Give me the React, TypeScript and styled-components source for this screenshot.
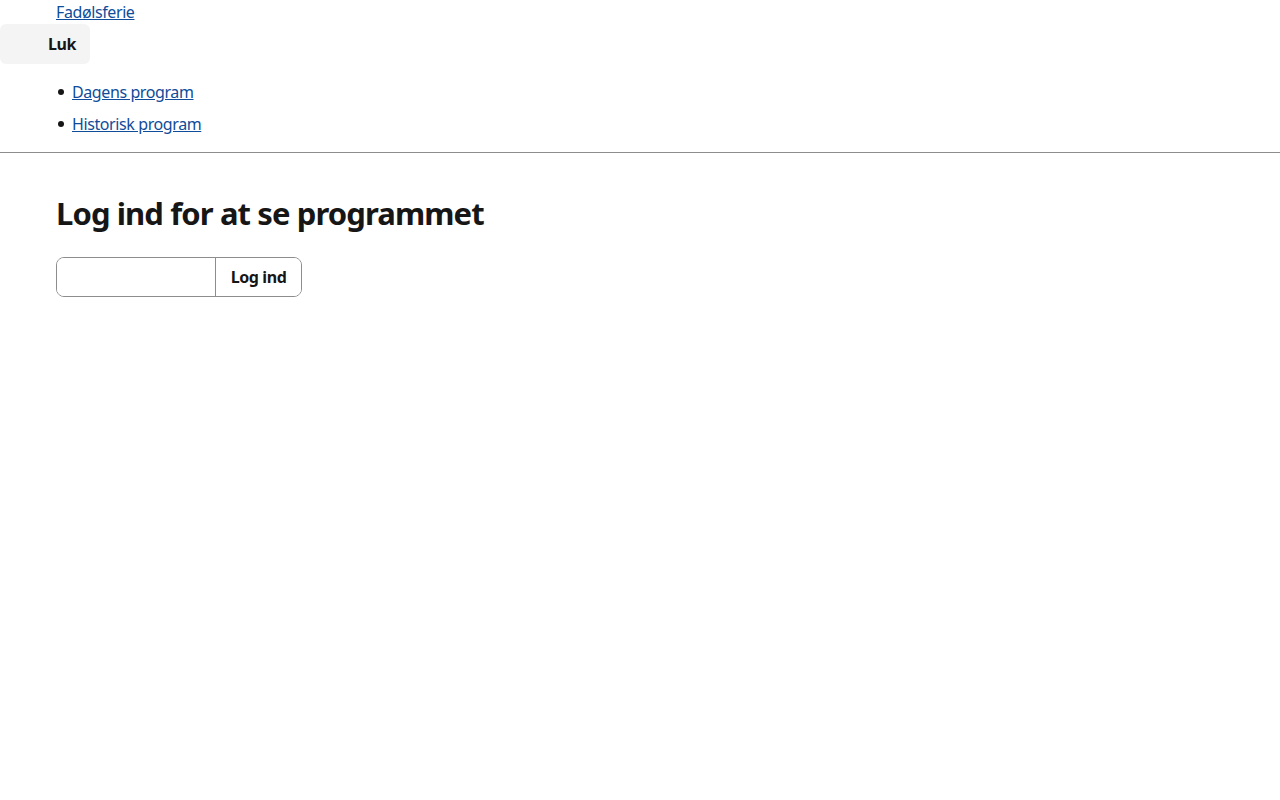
import React from "react";
import styled, { createGlobalStyle } from "styled-components";

const Global = createGlobalStyle`
  html, body { margin: 0; padding: 0; background: #fff; }
  body { font-family: "Noto Sans", "Liberation Sans", sans-serif; color: #161616; font-size: 16px; letter-spacing: -0.4px; }
  * { box-sizing: border-box; }
`;

const Header = styled.header`
  border-bottom: 1px solid #8d8d8d;
  padding-bottom: 8px;
`;

const TopLink = styled.a`
  display: block;
  margin-left: 56px;
  height: 24px;
  line-height: 24px;
  color: #0f4c9a;
  font-size: 16px;
  text-decoration: underline;
`;

const CloseButton = styled.button`
  display: flex;
  align-items: center;
  width: 90px;
  height: 40px;
  padding: 0 0 0 48px;
  border: none;
  border-radius: 6px;
  background: #f4f4f4;
  font-family: inherit;
  font-size: 16px;
  letter-spacing: -0.4px;
  font-weight: 700;
  color: #161616;
`;

const NavList = styled.ul`
  list-style: none;
  margin: 16px 0 0;
  padding-left: 72px;
`;

const NavItem = styled.li`
  position: relative;
  height: 32px;
  line-height: 24px;
  &::before {
    content: "";
    position: absolute;
    left: -14px;
    top: 9px;
    width: 6px;
    height: 6px;
    border-radius: 50%;
    background: #161616;
  }
`;

const NavLink = styled.a`
  color: #0f4c9a;
  text-decoration: underline;
`;

const Main = styled.main`
  padding: 40px 56px;
`;

const Title = styled.h1`
  margin: 0 0 24px;
  font-size: 31px;
  letter-spacing: -0.9px;
  line-height: 40px;
  font-weight: 700;
  color: #161616;
`;

const Form = styled.form`
  display: flex;
  width: 246px;
  height: 40px;
  border: 1px solid #8d8d8d;
  border-radius: 8px;
  overflow: hidden;
`;

const Input = styled.input`
  width: 159px;
  border: none;
  border-right: 1px solid #8d8d8d;
  font-family: inherit;
  font-size: 16px;
  padding: 0 8px;
  outline: none;
`;

const Submit = styled.button`
  flex: 1;
  border: none;
  background: #fff;
  font-family: inherit;
  font-size: 16px;
  letter-spacing: -0.4px;
  font-weight: 700;
  color: #161616;
`;

export default function App() {
  return (
    <>
      <Global />
      <Header>
        <TopLink href="#">Fadølsferie</TopLink>
        <CloseButton type="button">Luk</CloseButton>
        <NavList>
          <NavItem><NavLink href="#">Dagens program</NavLink></NavItem>
          <NavItem><NavLink href="#">Historisk program</NavLink></NavItem>
        </NavList>
      </Header>
      <Main>
        <Title>Log ind for at se programmet</Title>
        <Form onSubmit={(e) => e.preventDefault()}>
          <Input type="text" />
          <Submit type="submit">Log ind</Submit>
        </Form>
      </Main>
    </>
  );
}
